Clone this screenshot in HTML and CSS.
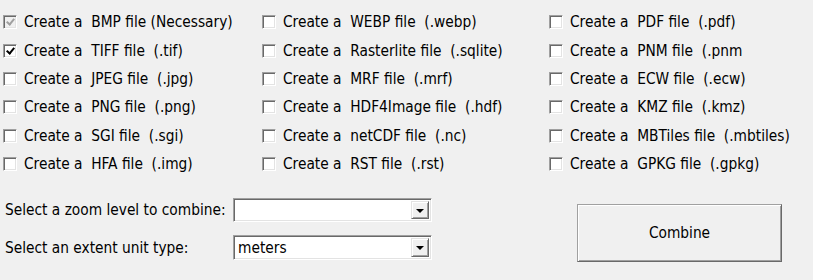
FILE: index.html
```html
<!DOCTYPE html>
<html>
<head>
<meta charset="utf-8">
<link rel="stylesheet" href="styles.css">
</head>
<body>
<div class="grid">
  <label class="opt"><span class="cb disabled checked"></span><span class="txt">Create a  BMP file (Necessary)</span></label>
  <label class="opt"><span class="cb"></span><span class="txt">Create a  WEBP file  (.webp)</span></label>
  <label class="opt"><span class="cb"></span><span class="txt">Create a  PDF file  (.pdf)</span></label>

  <label class="opt"><span class="cb checked"></span><span class="txt">Create a  TIFF file  (.tif)</span></label>
  <label class="opt"><span class="cb"></span><span class="txt">Create a  Rasterlite file  (.sqlite)</span></label>
  <label class="opt"><span class="cb"></span><span class="txt">Create a  PNM file  (.pnm</span></label>

  <label class="opt"><span class="cb"></span><span class="txt">Create a  JPEG file  (.jpg)</span></label>
  <label class="opt"><span class="cb"></span><span class="txt">Create a  MRF file  (.mrf)</span></label>
  <label class="opt"><span class="cb"></span><span class="txt">Create a  ECW file  (.ecw)</span></label>

  <label class="opt"><span class="cb"></span><span class="txt">Create a  PNG file  (.png)</span></label>
  <label class="opt"><span class="cb"></span><span class="txt">Create a  HDF4Image file  (.hdf)</span></label>
  <label class="opt"><span class="cb"></span><span class="txt">Create a  KMZ file  (.kmz)</span></label>

  <label class="opt"><span class="cb"></span><span class="txt">Create a  SGI file  (.sgi)</span></label>
  <label class="opt"><span class="cb"></span><span class="txt">Create a  netCDF file  (.nc)</span></label>
  <label class="opt"><span class="cb"></span><span class="txt">Create a  MBTiles file  (.mbtiles)</span></label>

  <label class="opt"><span class="cb"></span><span class="txt">Create a  HFA file  (.img)</span></label>
  <label class="opt"><span class="cb"></span><span class="txt">Create a  RST file  (.rst)</span></label>
  <label class="opt"><span class="cb"></span><span class="txt">Create a  GPKG file  (.gpkg)</span></label>
</div>
<div class="bottom">
  <div class="form">
    <div class="frow">
      <span class="lbl">Select a zoom level to combine:</span>
      <div class="combo"><span class="val"></span><span class="arrow"><span class="tri"></span></span></div>
    </div>
    <div class="frow">
      <span class="lbl">Select an extent unit type:</span>
      <div class="combo tall"><span class="val">meters</span><span class="arrow"><span class="tri"></span></span></div>
    </div>
  </div>
  <div class="btn">Combine</div>
</div>
</body>
</html>
```

FILE: styles.css
```css
html, body {
  margin: 0;
  padding: 0;
  background: #f0f0f0;
  width: 813px;
  height: 280px;
  overflow: hidden;
  font-family: "DejaVu Sans Condensed", "DejaVu Sans", sans-serif;
  font-size: 15.3px;
  color: #000;
}
.grid {
  display: grid;
  grid-template-columns: 259px 287px 267px;
  grid-auto-rows: 28.4px;
  padding: 8px 0 0 3px;
}
.opt {
  display: flex;
  align-items: center;
}
.txt {
  white-space: pre;
  margin-left: 7px;
}
.cb {
  box-sizing: border-box;
  width: 14px;
  height: 14px;
  background: #fff;
  border: 1px solid;
  border-color: #a0a0a0 #fff #fff #a0a0a0;
  box-shadow: inset 1px 1px 0 #696969, inset -1px -1px 0 #e3e3e3;
  position: relative;
  flex: none;
}
.cb.checked::after {
  content: "";
  position: absolute;
  left: 4px;
  top: 1px;
  width: 3px;
  height: 6px;
  border: solid #000;
  border-width: 0 2px 2px 0;
  transform: rotate(40deg);
}
.cb.disabled {
  background: #f0f0f0;
}
.cb.disabled.checked::after {
  border-color: #a0a0a0;
}
.bottom {
  display: flex;
  padding: 20px 0 0 5px;
}
.form {
  display: flex;
  flex-direction: column;
  gap: 13px;
}
.frow {
  display: grid;
  grid-template-columns: 228px 199px;
  align-items: center;
}
.combo {
  box-sizing: border-box;
  height: 24px;
  background: #fff;
  border: 1px solid;
  border-color: #a0a0a0 #fff #fff #a0a0a0;
  box-shadow: inset 1px 1px 0 #696969, inset -1px -1px 0 #e3e3e3;
  display: flex;
  align-items: stretch;
  padding: 2px 2px 2px 4px;
}
.combo.tall {
  height: 25px;
}
.val {
  flex: 1;
  display: flex;
  align-items: center;
}
.arrow {
  box-sizing: border-box;
  width: 18px;
  background: #f0f0f0;
  border: 1px solid;
  border-color: #e3e3e3 #696969 #696969 #e3e3e3;
  box-shadow: inset 1px 1px 0 #fff, inset -1px -1px 0 #a0a0a0;
  display: flex;
  align-items: center;
  justify-content: center;
}
.tri {
  width: 0;
  height: 0;
  border-left: 4px solid transparent;
  border-right: 4px solid transparent;
  border-top: 4px solid #000;
  margin-top: 1px;
}
.btn {
  box-sizing: border-box;
  margin-left: 145px;
  margin-top: 6px;
  width: 205px;
  height: 58px;
  border: 1px solid;
  border-color: #a0a0a0 #696969 #696969 #a0a0a0;
  box-shadow: inset 1px 1px 0 #fff, inset -1px -1px 0 #a0a0a0;
  display: flex;
  align-items: center;
  justify-content: center;
}
```
